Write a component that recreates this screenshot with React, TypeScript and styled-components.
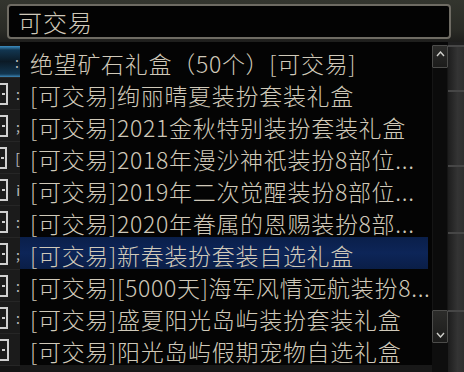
import React from 'react';
import styled, { createGlobalStyle } from 'styled-components';

const Global = createGlobalStyle`
  html, body { margin: 0; padding: 0; background: #1a1a19; }
  body { width: 464px; height: 372px; overflow: hidden; font-family: "Noto Sans CJK SC", "Noto Sans", sans-serif; }
`;

const Screen = styled.div`
  width: 464px;
  height: 372px;
  overflow: hidden;
  display: flex;
  flex-direction: column;
  background: linear-gradient(180deg, #33352e 0px, #2a2b26 30px, #1c1c1b 44px, #181818 100%);
`;

const SearchBar = styled.div`
  margin: 4px 13px 0 7px;
  height: 35px;
  box-sizing: border-box;
  border: 2px solid #6e6b63;
  border-radius: 4px;
  background: #030303;
  display: flex;
  align-items: center;
  padding-left: 9px;
  font-size: 24px;
  font-weight: 300;
  letter-spacing: 1px;
  color: #d0c9b9;
  line-height: 26px;
`;

const Body = styled.div`
  flex: 1;
  margin-top: 3px;
  display: grid;
  grid-template-columns: 20px 412px 16px 16px;
  align-items: start;
  min-height: 0;
`;

const LeftStrip = styled.div`
  display: flex;
  flex-direction: column;
  padding-top: 4px;
  background: #141414;
  align-self: stretch;
`;

const Slot = styled.div<{ $active?: boolean }>`
  height: 32px;
  flex: none;
  box-sizing: border-box;
  display: flex;
  align-items: center;
  gap: 6px;
  border-bottom: 1px solid #262626;
  background: ${p => (p.$active ? 'linear-gradient(180deg, #3d8fc4 0px, #123650 4px, #0b1a26 50%, #123650 28px, #4aa0d8 32px)' : '#1b1b1b')};
`;

const SlotIcon = styled.div`
  width: 9px;
  height: 22px;
  box-sizing: border-box;
  border: 2px solid #cfcfcf;
  border-left: none;
  display: flex;
  align-items: center;
  justify-content: center;
  &::after {
    content: '';
    width: 3px;
    height: 2px;
    background: #cfcfcf;
  }
`;

const SlotMark = styled.span`
  font-size: 14px;
  color: #bdbdbd;
  line-height: 1;
  margin-left: 2px;
`;

const List = styled.div`
  background: #040404;
  padding: 3px 0 0;
  display: flex;
  flex-direction: column;
`;

const Row = styled.div<{ $selected?: boolean }>`
  height: 32px;
  flex: none;
  box-sizing: border-box;
  padding: 3px 0 0 10px;
  margin-right: 4px;
  display: flex;
  align-items: center;
  font-size: 23px;
  font-weight: 300;
  line-height: 26px;
  letter-spacing: 0.7px;
  color: #d0c9b9;
  white-space: nowrap;
  background: ${p => (p.$selected ? 'linear-gradient(180deg, #0a1f4a, #0d2558 50%, #0a1e47)' : 'transparent')};
`;

const ScrollBar = styled.div`
  display: flex;
  flex-direction: column;
  padding-top: 3px;
  background: #070707;
  align-self: stretch;
`;

const ScrollButton = styled.div<{ $h: number; $down?: boolean }>`
  height: ${p => p.$h}px;
  flex: none;
  box-sizing: border-box;
  border: 1px solid #4c4c4a;
  border-radius: 1px;
  background: linear-gradient(180deg, #2c2c2a, #1c1c1b);
  display: flex;
  justify-content: center;
  align-items: ${p => (p.$down ? 'flex-end' : 'flex-start')};
  padding: ${p => (p.$down ? '0 0 4px' : '5px 0 0')};
`;

const Track = styled.div`
  flex: 1;
  border-left: 1px solid #151515;
  border-right: 1px solid #151515;
  background: #0b0b0b;
`;

const ScrollTail = styled.div`
  height: 29px;
  flex: none;
  background: #0e0e0e;
`;

const RightStrip = styled.div`
  display: flex;
  flex-direction: column;
  padding-top: 3px;
  background: #202020;
  align-self: stretch;
`;

const Panel = styled.div<{ $h: number }>`
  height: ${p => p.$h}px;
  flex: none;
  box-sizing: border-box;
  border-top: 2px solid #464646;
  background: linear-gradient(90deg, #1d1d1d, #343434 60%, #2e2e2e);
`;

const Chevron = ({ down }: { down?: boolean }) => (
  <svg width="9" height="6" viewBox="0 0 9 6">
    <polyline
      points={down ? '1,1 4.5,5 8,1' : '1,5 4.5,1 8,5'}
      fill="none"
      stroke="#d0d0cc"
      strokeWidth="1.4"
    />
  </svg>
);

const items = [
  '绝望矿石礼盒（50个）[可交易]',
  '[可交易]绚丽晴夏装扮套装礼盒',
  '[可交易]2021金秋特别装扮套装礼盒',
  '[可交易]2018年漫沙神祇装扮8部位...',
  '[可交易]2019年二次觉醒装扮8部位...',
  '[可交易]2020年眷属的恩赐装扮8部...',
  '[可交易]新春装扮套装自选礼盒',
  '[可交易][5000天]海军风情远航装扮8...',
  '[可交易]盛夏阳光岛屿装扮套装礼盒',
  '[可交易]阳光岛屿假期宠物自选礼盒',
];

const marks = [':', ';', '[', 'i', ':', ';', ':', ':', ''];

export default function App() {
  return (
    <>
      <Global />
      <Screen>
        <SearchBar>可交易</SearchBar>
        <Body>
          <LeftStrip>
            <Slot $active>
              <SlotMark style={{ marginLeft: 15 }}>:</SlotMark>
            </Slot>
            {marks.map((m, i) => (
              <Slot key={i}>
                <SlotIcon />
                <SlotMark>{m}</SlotMark>
              </Slot>
            ))}
          </LeftStrip>
          <List>
            {items.map((t, i) => (
              <Row key={i} $selected={i === 6}>
                {t}
              </Row>
            ))}
          </List>
          <ScrollBar>
            <ScrollButton $h={23}>
              <Chevron />
            </ScrollButton>
            <Track />
            <ScrollButton $h={33} $down>
              <Chevron down />
            </ScrollButton>
            <ScrollTail />
          </ScrollBar>
          <RightStrip>
            <Panel $h={45} />
            <Panel $h={75} />
            <Panel $h={67} />
            <Panel $h={78} />
            <Panel $h={62} />
          </RightStrip>
        </Body>
      </Screen>
    </>
  );
}
